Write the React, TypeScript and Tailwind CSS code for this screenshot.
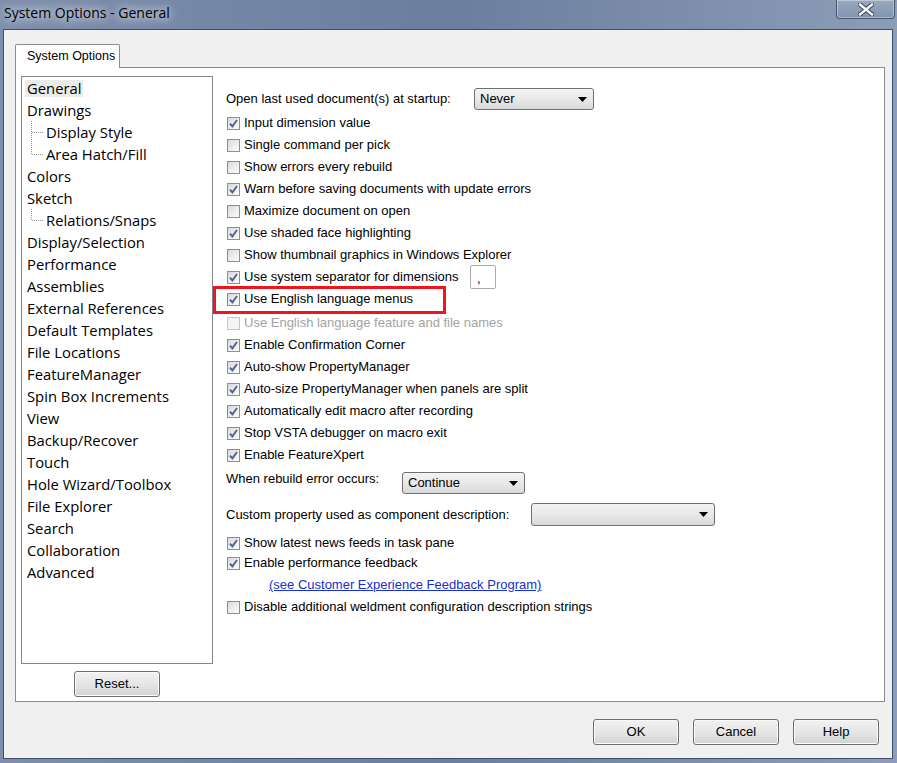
import React from 'react';

const UI = "font-['Liberation_Sans',Arial,sans-serif] text-[13px] text-black";
const TREE = "font-['Open_Sans','Noto_Sans',sans-serif] text-[14.8px] text-black";

type TreeNode = { label: string; selected?: boolean; child?: 'mid' | 'last' };

const tree: TreeNode[] = [
  { label: 'General', selected: true },
  { label: 'Drawings' },
  { label: 'Display Style', child: 'mid' },
  { label: 'Area Hatch/Fill', child: 'last' },
  { label: 'Colors' },
  { label: 'Sketch' },
  { label: 'Relations/Snaps', child: 'last' },
  { label: 'Display/Selection' },
  { label: 'Performance' },
  { label: 'Assemblies' },
  { label: 'External References' },
  { label: 'Default Templates' },
  { label: 'File Locations' },
  { label: 'FeatureManager' },
  { label: 'Spin Box Increments' },
  { label: 'View' },
  { label: 'Backup/Recover' },
  { label: 'Touch' },
  { label: 'Hole Wizard/Toolbox' },
  { label: 'File Explorer' },
  { label: 'Search' },
  { label: 'Collaboration' },
  { label: 'Advanced' },
];

const Checkbox = ({ checked, disabled }: { checked: boolean; disabled?: boolean }) => (
  <div
    className={`ml-[1px] flex h-[13px] w-[13px] shrink-0 items-center justify-center border ${
      disabled
        ? 'border-[#c6c6c6] bg-[#f4f4f4]'
        : 'border-[#8f8f8f] bg-gradient-to-br from-[#d8d8d8] via-[#ececec] to-[#fbfbfb]'
    }`}
  >
    {checked && (
      <svg width="11" height="11" viewBox="0 0 11 11">
        <path d="M2 5.6 L4.4 8.4 L9 2" fill="none" stroke="#4a6395" strokeWidth="1.9" />
      </svg>
    )}
  </div>
);

const CheckRow = ({
  label,
  checked,
  disabled,
  className = 'h-[22px]',
  children,
}: {
  label: string;
  checked: boolean;
  disabled?: boolean;
  className?: string;
  children?: React.ReactNode;
}) => (
  <div className={`relative flex items-center ${className}`}>
    <Checkbox checked={checked} disabled={disabled} />
    <span className={`ml-[4px] whitespace-nowrap ${disabled ? 'text-[#a3a3a3]' : ''}`}>{label}</span>
    {children}
  </div>
);

const Arrow = () => (
  <svg width="9" height="5" viewBox="0 0 9 5" className="shrink-0">
    <path d="M0 0 H9 L4.5 5 Z" fill="#000" />
  </svg>
);

const Dropdown = ({ value, className }: { value: string; className: string }) => (
  <div
    className={`flex shrink-0 items-center justify-between rounded-[3px] border border-[#707070] bg-gradient-to-b from-[#f3f3f3] via-[#e9e9e9] to-[#d9d9d9] pl-[5px] pr-[6px] ${className}`}
  >
    <span>{value}</span>
    <Arrow />
  </div>
);

const WinButton = ({ label, className = '' }: { label: string; className?: string }) => (
  <button
    className={`flex h-[26px] w-[86px] items-center justify-center rounded-[3px] border border-[#707070] bg-gradient-to-b from-[#f2f2f2] via-[#e6e6e6] to-[#d3d3d3] shadow-[inset_0_0_0_1px_#fbfbfb] ${UI} ${className}`}
  >
    {label}
  </button>
);

const Connector = ({ last }: { last: boolean }) => (
  <svg width="19" height="22" viewBox="0 0 19 22" className="shrink-0">
    <line x1="6.5" y1="0" x2="6.5" y2={last ? 11 : 22} stroke="#9a9a9a" strokeDasharray="1 1" />
    <line x1="7" y1="11.5" x2="18" y2="11.5" stroke="#9a9a9a" strokeDasharray="1 1" />
  </svg>
);

const TreeItem = ({ node }: { node: TreeNode }) => (
  <div className="flex h-[22px] items-center pl-[3px]">
    {node.child && <Connector last={node.child === 'last'} />}
    <span
      className={`flex h-[17px] items-center px-[2px] leading-none ${node.selected ? 'bg-[#ebebeb]' : ''}`}
    >
      {node.label}
    </span>
  </div>
);

export default function App() {
  return (
    <div className="flex h-[763px] w-[897px] flex-col overflow-hidden bg-gradient-to-r from-[#7d8fac] via-[#6b7e9e] to-[#8c9db7]">
      {/* Title bar */}
      <div className="flex h-[29px] shrink-0 items-start justify-between">
        <span className="pl-[4px] pt-[2px] font-['Open_Sans','Noto_Sans',sans-serif] text-[14px] text-black [text-shadow:0_0_8px_rgba(255,255,255,0.95),0_0_14px_rgba(255,255,255,0.7)]">
          System Options - General
        </span>
        <div className="mr-[2px] flex h-[19px] w-[59px] items-center justify-center rounded-b-[4px] border border-t-0 border-[#46566f] bg-gradient-to-b from-[#9aa9c0] to-[#8193ae] shadow-[inset_0_0_0_1px_rgba(255,255,255,0.35)]">
          <svg width="16" height="13" viewBox="0 0 16 13">
            <path d="M2 1.5 L14 11.5 M14 1.5 L2 11.5" stroke="#3b4658" strokeWidth="4.4" strokeLinecap="square" />
            <path d="M2 1.5 L14 11.5 M14 1.5 L2 11.5" stroke="#f4f6f9" strokeWidth="2.4" strokeLinecap="square" />
          </svg>
        </div>
      </div>

      {/* Window body */}
      <div className={`mb-[4px] ml-[3px] mr-[4px] flex flex-1 flex-col border border-[#3f4f6b] bg-[#f0f0f0] pl-[11px] pr-[7px] pt-[14px] ${UI}`}>
        {/* Tab header */}
        <div className="flex h-[23px]">
          <div className="relative z-10 -mb-px flex w-[105px] items-center rounded-t-[2px] border border-b-0 border-[#898c95] bg-white pl-[11px] text-[12.5px]">
            System Options
          </div>
        </div>

        {/* Tab page */}
        <div className="flex h-[635px] border border-[#898c95] bg-white">
          {/* Left tree */}
          <div className="flex flex-col items-center pl-[5px] pt-[8px]">
            <div className={`h-[588px] w-[192px] border border-[#828790] bg-white ${TREE}`}>
              {tree.map((n) => (
                <TreeItem key={n.label} node={n} />
              ))}
            </div>
            <WinButton label="Reset..." className="mt-[7px]" />
          </div>

          {/* Right options */}
          <div className="ml-[13px] flex flex-col pt-[20px]">
            <div className="flex h-[22px] items-center">
              <span className="w-[248px] whitespace-nowrap">Open last used document(s) at startup:</span>
              <Dropdown value="Never" className="h-[22px] w-[120px]" />
            </div>

            <div className="mt-[2px] flex flex-col">
              <CheckRow label="Input dimension value" checked />
              <CheckRow label="Single command per pick" checked={false} />
              <CheckRow label="Show errors every rebuild" checked={false} />
              <CheckRow label="Warn before saving documents with update errors" checked />
              <CheckRow label="Maximize document on open" checked={false} />
              <CheckRow label="Use shaded face highlighting" checked />
              <CheckRow label="Show thumbnail graphics in Windows Explorer" checked={false} />
              <div className="relative flex h-[22px] items-center">
                <Checkbox checked />
                <span className="ml-[4px] w-[226px] whitespace-nowrap">Use system separator for dimensions</span>
                <div className="flex h-[24px] w-[26px] shrink-0 items-end rounded-[2px] border border-[#ababab] bg-white pb-[3px] pl-[6px] leading-none">
                  ,
                </div>
              </div>
              <CheckRow label="Use English language menus" checked>
                <div className="pointer-events-none absolute left-[-13px] top-[-2px] h-[28px] w-[233px] border-[3px] border-[#f0141b]" />
              </CheckRow>
              <CheckRow label="Use English language feature and file names" checked={false} disabled className="mt-[2px] h-[22px]" />
              <CheckRow label="Enable Confirmation Corner" checked />
              <CheckRow label="Auto-show PropertyManager" checked />
              <CheckRow label="Auto-size PropertyManager when panels are split" checked />
              <CheckRow label="Automatically edit macro after recording" checked />
              <CheckRow label="Stop VSTA debugger on macro exit" checked />
              <CheckRow label="Enable FeatureXpert" checked />
            </div>

            <div className="mt-[6px] flex h-[22px] items-center">
              <span className="mb-[8px] w-[176px] whitespace-nowrap">When rebuild error occurs:</span>
              <Dropdown value="Continue" className="h-[22px] w-[123px]" />
            </div>

            <div className="mt-[9px] flex h-[23px] items-center">
              <span className="w-[305px] whitespace-nowrap">Custom property used as component description:</span>
              <Dropdown value="" className="h-[23px] w-[184px]" />
            </div>

            <div className="mt-[7px] flex flex-col">
              <CheckRow label="Show latest news feeds in task pane" checked className="h-[20px]" />
              <CheckRow label="Enable performance feedback" checked className="h-[20px]" />
              <div className="mt-[1px] flex h-[22px] items-center pl-[43px]">
                <span className="cursor-pointer whitespace-nowrap text-[#1530cc] underline">
                  (see Customer Experience Feedback Program)
                </span>
              </div>
              <CheckRow label="Disable additional weldment configuration description strings" checked={false} />
            </div>
          </div>
        </div>

        {/* Dialog buttons */}
        <div className="mt-[17px] flex justify-end gap-[14px] pr-[6px]">
          <WinButton label="OK" />
          <WinButton label="Cancel" />
          <WinButton label="Help" />
        </div>
      </div>
    </div>
  );
}
